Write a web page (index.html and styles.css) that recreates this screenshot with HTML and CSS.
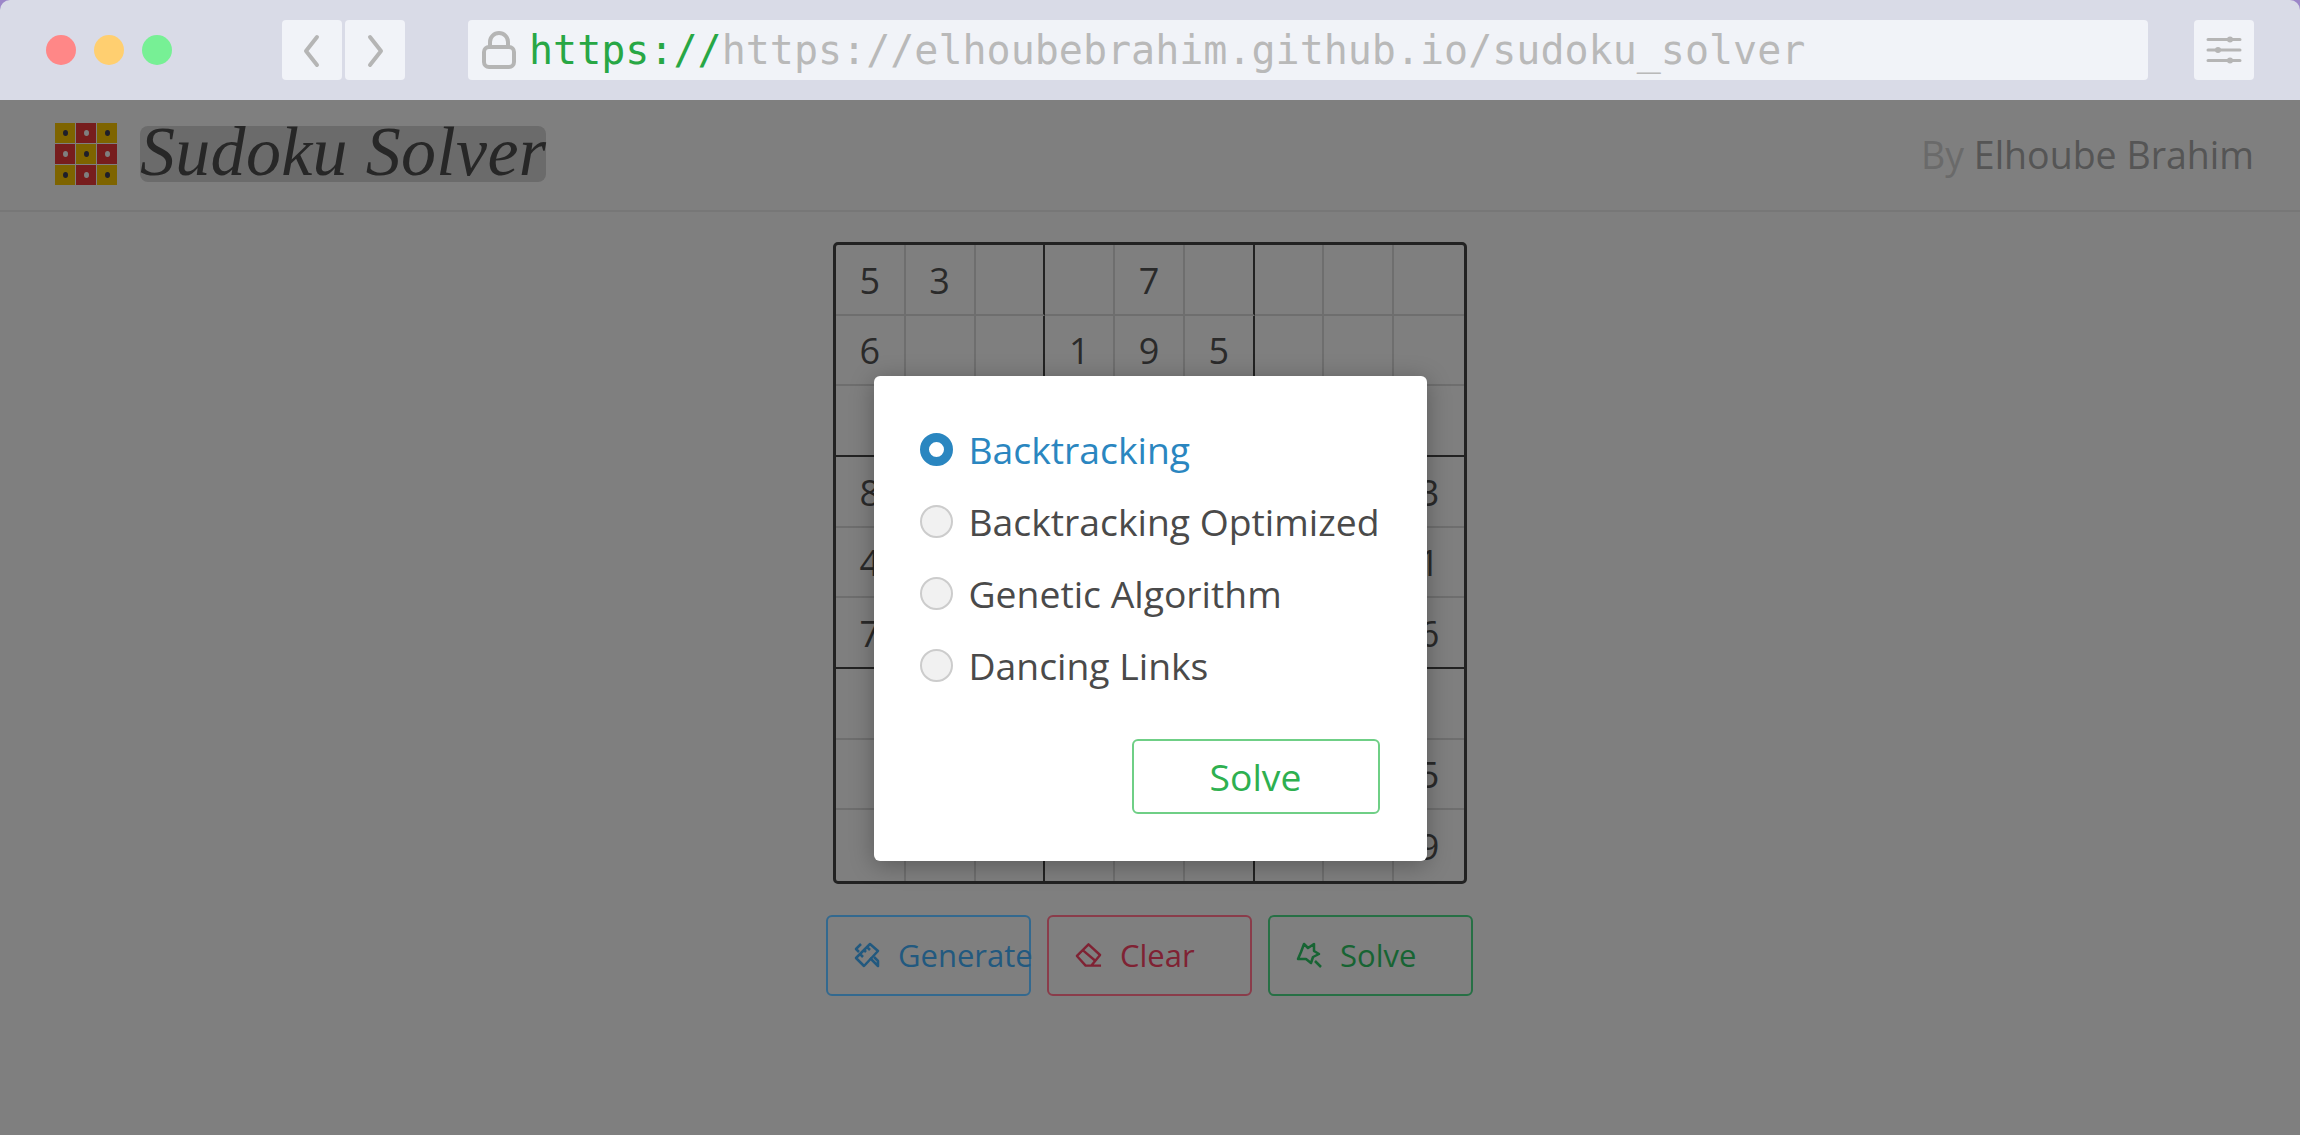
FILE: index.html
```html
<!DOCTYPE html>
<html lang="en">
<head>
  <meta charset="UTF-8">
  <title>Sudoku Solver</title>
  <link rel="stylesheet" href="styles.css">
</head>
<body>
  <div class="window">
    <div class="toolbar">
      <div class="lights">
        <span class="light red"></span>
        <span class="light yellow"></span>
        <span class="light green"></span>
      </div>
      <div class="nav">
        <button class="tool-btn">
          <svg width="60" height="60" viewBox="0 0 60 60"><path d="M35 17 L24 31 L35 45" class="tool-icon"/></svg>
        </button>
        <button class="tool-btn">
          <svg width="60" height="60" viewBox="0 0 60 60"><path d="M25 17 L36 31 L25 45" class="tool-icon"/></svg>
        </button>
      </div>
      <div class="urlbar">
        <svg class="lock" width="34" height="38" viewBox="0 0 34 38"><rect x="2" y="16" width="30" height="20" rx="5" class="tool-icon"/><path d="M8 16 V11 a9 9 0 0 1 18 0 V16" class="tool-icon"/></svg>
        <span class="url"><span class="scheme">https://</span>https://elhoubebrahim.github.io/sudoku_solver</span>
      </div>
      <button class="tool-btn settings">
        <svg width="60" height="60" viewBox="0 0 60 60">
          <path d="M14 19.500 H46 M14 30 H46 M14 40.500 H46" class="tool-icon thin"/>
          <circle cx="36" cy="19.500" r="3" class="knob"/>
          <circle cx="24" cy="30" r="3" class="knob"/>
          <circle cx="36" cy="40.500" r="3" class="knob"/>
        </svg>
      </button>
    </div>

    <div class="page">
      <header class="header">
        <div class="brand">
          <div class="logo">
            <span class="sq gold"></span><span class="sq crimson"></span><span class="sq gold"></span>
            <span class="sq crimson"></span><span class="sq gold"></span><span class="sq crimson"></span>
            <span class="sq gold"></span><span class="sq crimson"></span><span class="sq gold"></span>
          </div>
          <div class="wordmark">Sudoku Solver</div>
        </div>
        <div class="byline"><span class="by">By</span> Elhoube Brahim</div>
      </header>

      <main class="main">
        <div class="board" id="board"></div>
        <div class="actions">
          <button class="btn btn-blue">
            <svg width="26" height="26" viewBox="0 0 26 26" class="btn-icon">
              <path d="M2 16 L16 2 L24 9 L10 24 Z M6 12 L9 15 M10 8 L12 10 M13 5 L16 8"/>
              <path d="M7 2 L2 7 L5 10 M16 16 L20 20 L24 24 L24 19 L20 15"/>
            </svg>
            <span>Generate</span>
          </button>
          <button class="btn btn-red">
            <svg width="27" height="26" viewBox="0 0 28 26" class="btn-icon">
              <path d="M14 2 L26 13 L17 24 L11 24 L2 14 Z M8 8 L21 19 M14 24 H27"/>
            </svg>
            <span>Clear</span>
          </button>
          <button class="btn btn-green">
            <svg width="26" height="26" viewBox="0 0 26 26" class="btn-icon">
              <path d="M8 2 L12 6 L18 2 L18 9 L23 12 L17 15 L15 21 L10 17 L2 17 L5 10 Z M19 19 L25 25"/>
            </svg>
            <span>Solve</span>
          </button>
        </div>
      </main>

      <div class="overlay">
        <div class="modal">
          <label class="option active"><input type="radio" name="algo" checked>Backtracking</label>
          <label class="option"><input type="radio" name="algo">Backtracking Optimized</label>
          <label class="option"><input type="radio" name="algo">Genetic Algorithm</label>
          <label class="option"><input type="radio" name="algo">Dancing Links</label>
          <div class="modal-footer">
            <button class="modal-solve">Solve</button>
          </div>
        </div>
      </div>
    </div>
  </div>

  <script>
    const puzzle = [
      "53  7    ",
      "6  195   ",
      " 98    6 ",
      "8   6   3",
      "4  8 3  1",
      "7   2   6",
      " 6    28 ",
      "   419  5",
      "    8  79"
    ];
    const board = document.getElementById("board");
    puzzle.forEach((row, r) => {
      [...row].forEach((val, c) => {
        const cell = document.createElement("div");
        cell.className = "cell";
        if (c === 2 || c === 5) cell.classList.add("box-right");
        if (r === 2 || r === 5) cell.classList.add("box-bottom");
        cell.textContent = val.trim();
        board.appendChild(cell);
      });
    });
  </script>
</body>
</html>
```

FILE: styles.css
```css
* {
  box-sizing: border-box;
}
html, body {
  margin: 0;
  height: 100%;
  overflow: hidden;
  background-color: #9c86c8;
}
body {
  font-family: "Open Sans", sans-serif;
}
button {
  font-family: inherit;
  padding: 0;
  cursor: pointer;
}
.window {
  height: 1135px;
  display: flex;
  flex-direction: column;
  border-radius: 10px 10px 0 0;
  overflow: hidden;
}

/* browser chrome */
.toolbar {
  height: 100px;
  flex: none;
  background-color: #d9dbe7;
  display: flex;
  align-items: center;
  padding: 0 46px;
}
.lights {
  display: flex;
  gap: 18px;
}
.light {
  width: 30px;
  height: 30px;
  border-radius: 50%;
}
.light.red { background-color: #ff8787; }
.light.yellow { background-color: #ffcf70; }
.light.green { background-color: #77f095; }
.nav {
  display: flex;
  gap: 3px;
  margin-left: 110px;
}
.tool-btn {
  width: 60px;
  height: 60px;
  border: 0;
  border-radius: 4px;
  background-color: #f1f3f8;
  display: block;
}
.tool-btn svg {
  display: block;
}
.tool-icon {
  fill: none;
  stroke: #b5b5b5;
  stroke-width: 4;
  stroke-linecap: round;
  stroke-linejoin: round;
}
.tool-icon.thin {
  stroke-width: 3;
}
.knob {
  fill: #b5b5b5;
}
.urlbar {
  width: 1680px;
  height: 60px;
  margin-left: 63px;
  padding-left: 14px;
  display: flex;
  align-items: center;
  gap: 13px;
  border-radius: 4px;
  background-color: #f1f3f8;
}
.lock {
  flex: none;
}
.url {
  font-family: "DejaVu Sans Mono", monospace;
  font-size: 40px;
  color: #b9b9b9;
  white-space: nowrap;
}
.scheme {
  color: #28a745;
}
.settings {
  margin-left: 46px;
}

/* page below the chrome */
.page {
  flex: 1;
  position: relative;
  background-color: #fff;
}
.header {
  height: 112px;
  padding: 0 46px 2px 55px;
  display: flex;
  align-items: center;
  justify-content: space-between;
  border-bottom: 2px solid #eee;
}
.brand {
  display: flex;
  align-items: center;
  gap: 23px;
}
.logo {
  width: 62px;
  height: 62px;
  display: grid;
  grid-template-columns: repeat(3, 1fr);
  grid-template-rows: repeat(3, 1fr);
  gap: 1px;
}
.sq {
  display: flex;
  align-items: center;
  justify-content: center;
}
.sq::after {
  content: "";
  width: 5px;
  height: 6px;
  border-radius: 50%;
}
.sq.gold { background-color: #fdc800; }
.sq.gold::after { background-color: #3a3f55; }
.sq.crimson { background-color: #ee3b3b; }
.sq.crimson::after { background-color: #fff; }
.wordmark {
  width: 406px;
  height: 56px;
  line-height: 52px;
  border-radius: 8px;
  background-color: #d6d6d6;
  font-family: "Liberation Serif", serif;
  font-style: italic;
  font-size: 70px;
  letter-spacing: 0.3px;
  color: #4f4f4f;
  white-space: nowrap;
}
.byline {
  font-size: 37.500px;
  color: #aaa;
}
.by {
  color: #d4d4d4;
}
.main {
  padding-top: 30px;
  display: flex;
  flex-direction: column;
  align-items: center;
}
.board {
  width: 634px;
  height: 642px;
  display: grid;
  grid-template-columns: repeat(9, 1fr);
  grid-template-rows: repeat(9, 1fr);
  border: 3px solid #444;
  border-radius: 5px;
}
.cell {
  display: flex;
  align-items: center;
  justify-content: center;
  padding-top: 2px;
  font-size: 36px;
  color: #555;
  border-right: 2px solid #ddd;
  border-bottom: 2px solid #ddd;
}
.cell:nth-child(9n) {
  border-right: 0;
}
.cell:nth-last-child(-n+9) {
  border-bottom: 0;
}
.cell.box-right {
  border-right: 2px solid #444;
}
.cell.box-bottom {
  border-bottom: 2px solid #444;
}
/* these keep their tint through the backdrop, so they sit on top of it */
.actions {
  position: relative;
  z-index: 2;
  margin-top: 31px;
  margin-right: 1px;
  display: flex;
  gap: 16px;
}
.btn {
  width: 205px;
  height: 81px;
  padding: 0 0 2px 26px;
  display: flex;
  align-items: center;
  gap: 18px;
  background: transparent;
  border: 2px solid;
  border-radius: 6px;
  font-size: 31px;
  white-space: nowrap;
}
.btn-icon {
  flex: none;
  fill: none;
  stroke: currentColor;
  stroke-width: 2.500;
  stroke-linejoin: round;
}
.btn-blue { color: #22597f; border-color: #33698f; }
.btn-red { color: #7f2233; border-color: #8a3c4a; }
.btn-green { color: #176433; border-color: #277045; }

/* algorithm picker */
.overlay {
  position: absolute;
  inset: 0;
  display: flex;
  align-items: center;
  justify-content: center;
  background-color: rgba(0, 0, 0, 0.5);
}
.modal {
  width: 553px;
  height: 485px;
  margin-top: 2px;
  padding: 37px 47px 0 46px;
  background-color: #fff;
  border-radius: 6px;
  box-shadow: 0 4px 24px rgba(0, 0, 0, 0.3);
}
.option {
  height: 72px;
  display: flex;
  align-items: center;
  gap: 16px;
  font-size: 37.300px;
  color: #4a4a4a;
  white-space: nowrap;
}
.option.active {
  color: #2a86c0;
}
.option input {
  appearance: none;
  flex: none;
  margin: 0;
  width: 33px;
  height: 33px;
  border-radius: 50%;
  border: 2px solid #ccc;
  background-color: #f1f1f1;
}
.option input:checked {
  border: 9px solid #2a86c0;
  background-color: #fff;
}
.modal-footer {
  margin-top: 38px;
  display: flex;
  justify-content: flex-end;
}
.modal-solve {
  width: 248px;
  height: 75px;
  background: #fff;
  border: 2px solid #6fcf86;
  border-radius: 6px;
  color: #2eb050;
  font-size: 37.300px;
}
```
